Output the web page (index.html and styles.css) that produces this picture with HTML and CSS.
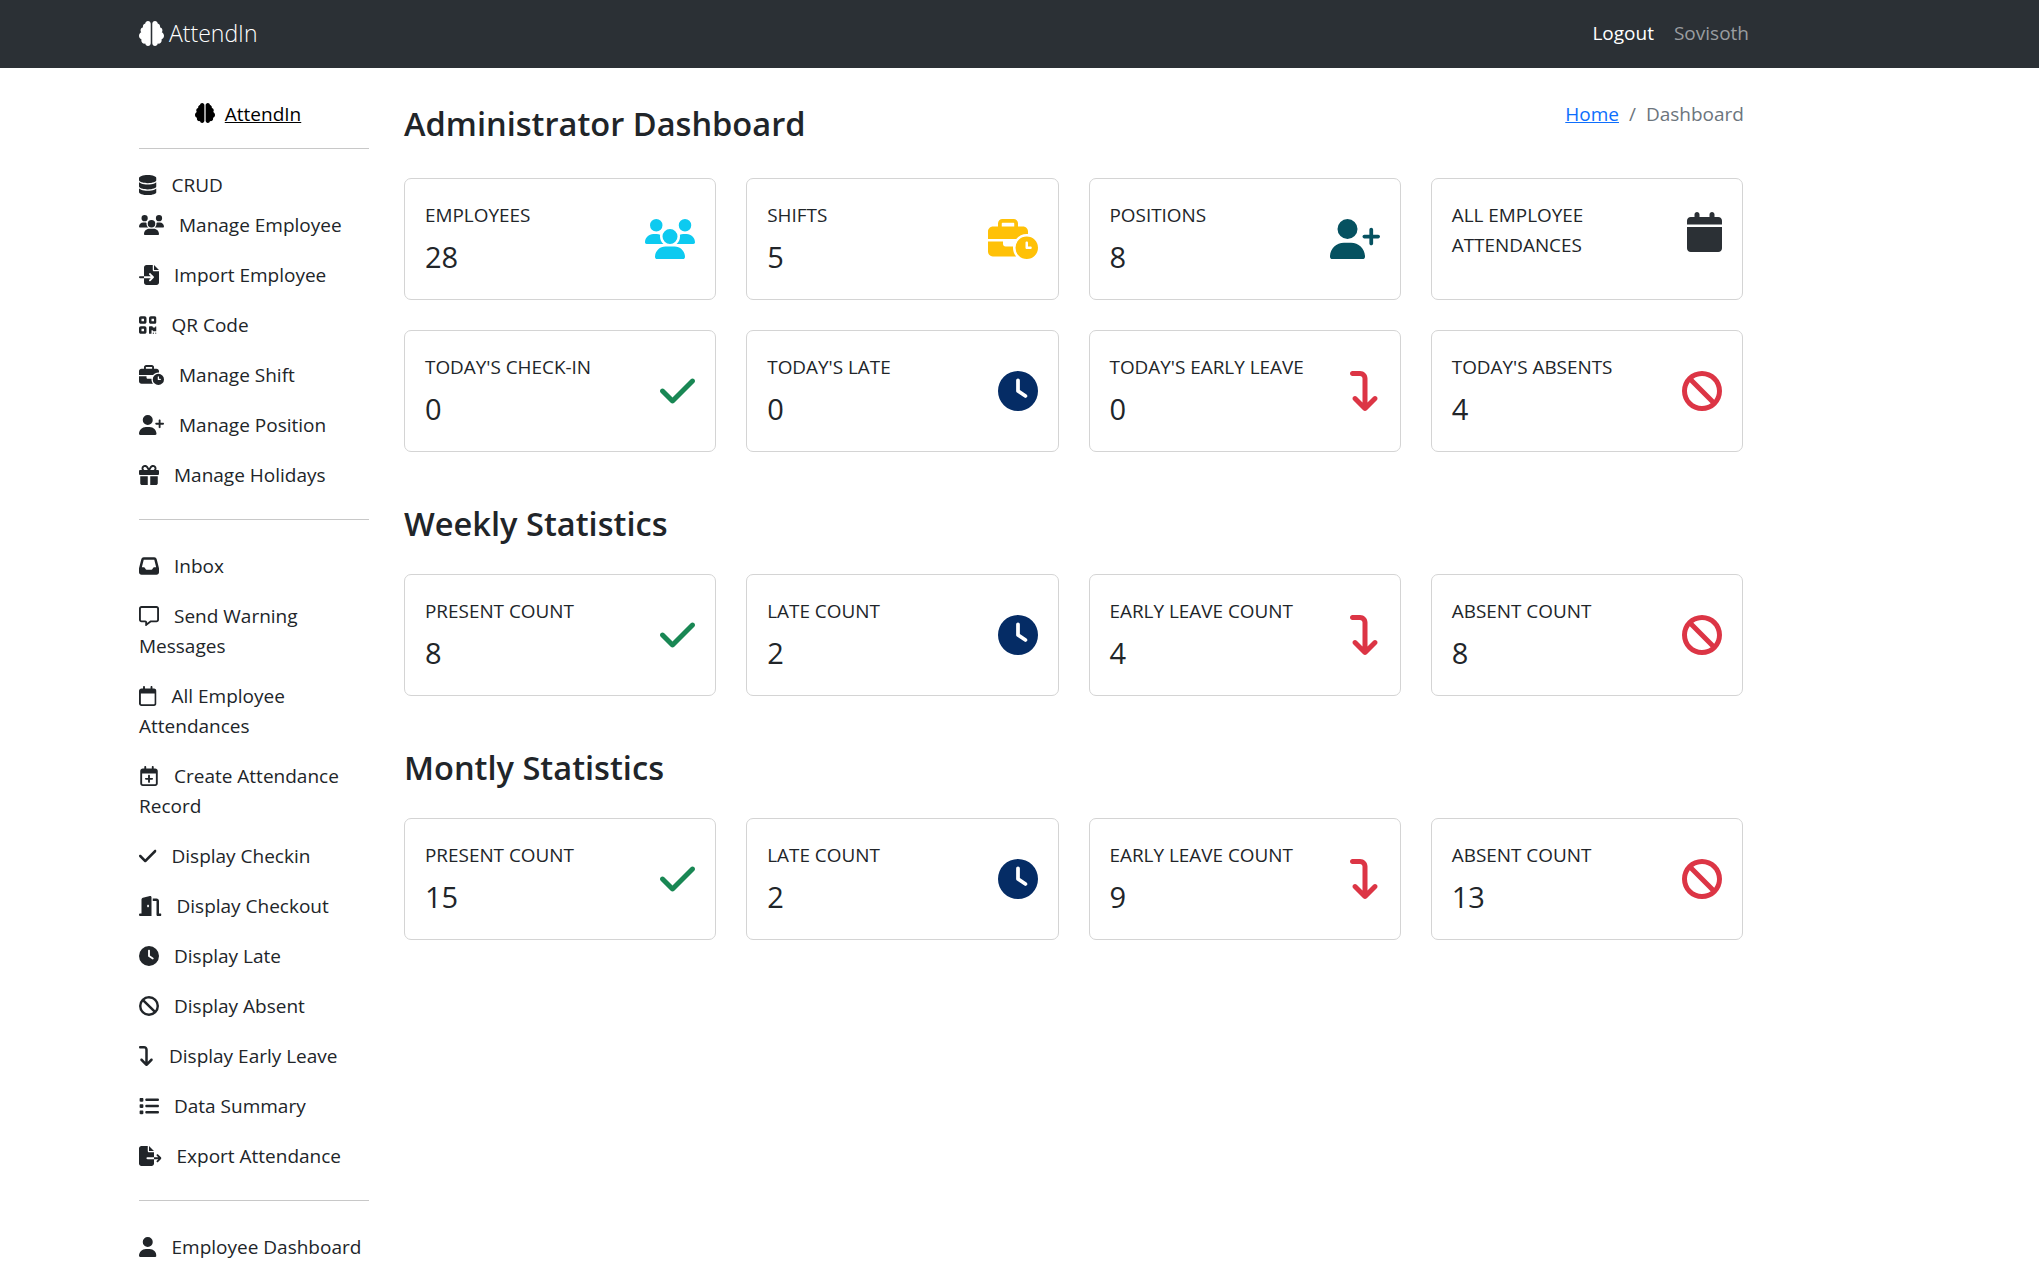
FILE: index.html
```html
<!DOCTYPE html>
<html lang="en">
<head>
<meta charset="utf-8">
<title>AttendIn</title>
<link rel="stylesheet" href="styles.css">
</head>
<body>
<svg class="defs" aria-hidden="true">
<symbol id="brain" viewBox="0 0 512 512"><path d="M184 0c30.9 0 56 25.1 56 56V456c0 30.9-25.1 56-56 56c-28.9 0-52.7-21.9-55.7-50.1c-5.2 1.4-10.7 2.1-16.3 2.1c-35.3 0-64-28.7-64-64c0-7.4 1.3-14.6 3.6-21.2C21.4 367.4 0 338.2 0 304c0-31.9 18.7-59.5 45.8-72.3C37.1 220.8 32 207 32 192c0-30.7 21.6-56.3 50.4-62.6C80.8 123.9 80 118 80 112c0-29.9 20.6-55.1 48.3-62.1C131.3 21.9 155.1 0 184 0zM328 0c28.9 0 52.6 21.9 55.7 49.9c27.8 7 48.3 32.1 48.3 62.1c0 6-.8 11.9-2.4 17.4c28.8 6.2 50.4 31.9 50.4 62.6c0 15-5.1 28.8-13.8 39.7C493.3 244.5 512 272.1 512 304c0 34.2-21.4 63.4-51.6 74.8c2.3 6.6 3.6 13.8 3.6 21.2c0 35.3-28.7 64-64 64c-5.6 0-11.1-.7-16.3-2.1c-3 28.2-26.8 50.1-55.7 50.1c-30.9 0-56-25.1-56-56V56c0-30.9 25.1-56 56-56z"/></symbol>
<symbol id="database" viewBox="0 0 448 512"><path d="M448 80v48c0 44.2-100.3 80-224 80S0 172.2 0 128V80C0 35.8 100.3 0 224 0S448 35.8 448 80zM393.2 214.7c20.8-7.4 39.9-16.9 54.8-28.6V288c0 44.2-100.3 80-224 80S0 332.2 0 288V186.1c14.9 11.8 34 21.2 54.8 28.6C99.7 230.7 159.5 240 224 240s124.3-9.3 169.2-25.3zM0 346.1c14.9 11.8 34 21.2 54.8 28.6C99.7 390.7 159.5 400 224 400s124.3-9.3 169.2-25.3c20.8-7.4 39.9-16.9 54.8-28.6V432c0 44.2-100.3 80-224 80S0 476.2 0 432V346.1z"/></symbol>
<symbol id="users" viewBox="0 0 640 512"><path d="M144 0a80 80 0 1 1 0 160A80 80 0 1 1 144 0zM512 0a80 80 0 1 1 0 160A80 80 0 1 1 512 0zM0 298.7C0 239.8 47.8 192 106.7 192h42.7c15.9 0 31 3.5 44.6 9.7c-1.3 7.2-1.9 14.7-1.9 22.3c0 38.2 16.8 72.5 43.3 96c-.2 0-.4 0-.7 0H21.3C9.6 320 0 310.4 0 298.7zM405.3 320c-.2 0-.4 0-.7 0c26.6-23.5 43.3-57.8 43.3-96c0-7.6-.7-15-1.9-22.3c13.6-6.3 28.7-9.7 44.6-9.7h42.7C592.2 192 640 239.8 640 298.7c0 11.8-9.6 21.3-21.3 21.3H405.3zM224 224a96 96 0 1 1 192 0 96 96 0 1 1 -192 0zM128 485.3C128 411.7 187.7 352 261.3 352H378.7C452.3 352 512 411.7 512 485.3c0 14.7-11.9 26.7-26.7 26.7H154.7c-14.7 0-26.7-11.9-26.7-26.7z"/></symbol>
<symbol id="file-import" viewBox="0 0 512 512"><path d="M128 64c0-35.3 28.7-64 64-64H352V128c0 17.7 14.3 32 32 32H512V448c0 35.3-28.7 64-64 64H192c-35.3 0-64-28.7-64-64V336H302.1l-39 39c-9.4 9.4-9.4 24.6 0 33.9s24.6 9.4 33.9 0l80-80c9.4-9.4 9.4-24.6 0-33.9l-80-80c-9.4-9.4-24.6-9.4-33.9 0s-9.4 24.6 0 33.9l39 39H128V64zm0 224v48H24c-13.3 0-24-10.7-24-24s10.7-24 24-24H128zM512 128H384V0L512 128z"/></symbol>
<symbol id="qr" viewBox="0 0 448 512"><path d="M0 80C0 53.5 21.5 32 48 32h96c26.5 0 48 21.5 48 48v96c0 26.5-21.5 48-48 48H48c-26.5 0-48-21.5-48-48V80zM64 96v64h64V96H64zM0 336c0-26.5 21.5-48 48-48h96c26.5 0 48 21.5 48 48v96c0 26.5-21.5 48-48 48H48c-26.5 0-48-21.5-48-48V336zm64 16v64h64V352H64zM304 32h96c26.5 0 48 21.5 48 48v96c0 26.5-21.5 48-48 48H304c-26.5 0-48-21.5-48-48V80c0-26.5 21.5-48 48-48zm80 64H320v64h64V96zM256 304c0-8.8 7.2-16 16-16h64c8.8 0 16 7.2 16 16s7.2 16 16 16h32c8.8 0 16-7.2 16-16s7.2-16 16-16s16 7.2 16 16v96c0 8.8-7.2 16-16 16H368c-8.8 0-16-7.2-16-16s-7.2-16-16-16s-16 7.2-16 16v64c0 8.8-7.2 16-16 16H272c-8.8 0-16-7.2-16-16V304zM368 480a16 16 0 1 1 0-32 16 16 0 1 1 0 32zm64 0a16 16 0 1 1 0-32 16 16 0 1 1 0 32z"/></symbol>
<symbol id="business-time" viewBox="0 0 640 512"><path d="M184 48H328c4.4 0 8 3.6 8 8V96H176V56c0-4.4 3.6-8 8-8zm-56 8V96H64C28.7 96 0 124.7 0 160v96H192 352h8.2c32.3-39.1 81.1-64 135.8-64c5.4 0 10.7 .2 16 .7V160c0-35.3-28.7-64-64-64H384V56c0-30.9-25.1-56-56-56H184c-30.9 0-56 25.1-56 56zM320 352H224c-17.7 0-32-14.3-32-32V288H0V416c0 35.3 28.7 64 64 64H360.2C335.1 449.6 320 410.5 320 368c0-5.4 .2-10.7 .7-16l-.7 0zm320 16a144 144 0 1 0 -288 0 144 144 0 1 0 288 0zM496 288c8.8 0 16 7.2 16 16v48h32c8.8 0 16 7.2 16 16s-7.2 16-16 16H496c-8.8 0-16-7.2-16-16V304c0-8.8 7.2-16 16-16z"/></symbol>
<symbol id="user-plus" viewBox="0 0 640 512"><path d="M96 128a128 128 0 1 1 256 0A128 128 0 1 1 96 128zM0 482.3C0 383.8 79.8 304 178.3 304h91.4C368.2 304 448 383.8 448 482.3c0 16.4-13.3 29.7-29.7 29.7H29.7C13.3 512 0 498.7 0 482.3zM504 312V248H440c-13.3 0-24-10.7-24-24s10.7-24 24-24h64V136c0-13.3 10.7-24 24-24s24 10.7 24 24v64h64c13.3 0 24 10.7 24 24s-10.7 24-24 24H552v64c0 13.3-10.7 24-24 24s-24-10.7-24-24z"/></symbol>
<symbol id="gift" viewBox="0 0 512 512"><path d="M190.5 68.8L225.3 128H224 152c-22.1 0-40-17.9-40-40s17.9-40 40-40h2.2c14.9 0 28.8 7.9 36.3 20.8zM64 88c0 14.4 3.5 28 9.6 40H32c-17.7 0-32 14.3-32 32v64c0 17.7 14.3 32 32 32H480c17.7 0 32-14.3 32-32V160c0-17.7-14.3-32-32-32H438.4c6.1-12 9.6-25.6 9.6-40c0-48.6-39.4-88-88-88h-2.2c-31.9 0-61.5 16.9-77.7 44.4L256 85.5l-24.1-41C215.7 16.9 186.1 0 154.2 0H152C103.4 0 64 39.4 64 88zm336 0c0 22.1-17.9 40-40 40H288h-1.3l34.8-59.2C329.1 55.9 342.9 48 357.8 48H360c22.1 0 40 17.9 40 40zM32 288V464c0 26.5 21.5 48 48 48H224V288H32zM288 512H432c26.5 0 48-21.5 48-48V288H288V512z"/></symbol>
<symbol id="inbox" viewBox="0 0 512 512"><path d="M121 32C91.6 32 66 52 58.9 80.5L1.9 308.4C.6 313.5 0 318.7 0 323.9V416c0 35.3 28.7 64 64 64H448c35.3 0 64-28.7 64-64V323.9c0-5.2-.6-10.4-1.9-15.5l-57-227.9C446 52 420.4 32 391 32H121zm0 64H391l48 192H387.8c-12.1 0-23.2 6.8-28.6 17.7l-14.3 28.6c-5.4 10.8-16.5 17.7-28.6 17.7H195.8c-12.1 0-23.2-6.8-28.6-17.7l-14.3-28.6c-5.4-10.8-16.5-17.7-28.6-17.7H73L121 96z"/></symbol>
<symbol id="message" viewBox="0 0 512 512"><path d="M160 368c26.5 0 48 21.5 48 48v16l72.5-54.4c8.3-6.2 18.4-9.6 28.8-9.6H448c8.8 0 16-7.2 16-16V64c0-8.8-7.2-16-16-16H64c-8.8 0-16 7.2-16 16V352c0 8.8 7.2 16 16 16h96zm48 124l-.2 .2-5.1 3.8-17.1 12.8c-4.8 3.6-11.3 4.2-16.8 1.5s-8.8-8.2-8.8-14.3V474.7v-6.4V468v-4V416H112 64c-35.3 0-64-28.7-64-64V64C0 28.7 28.7 0 64 0H448c35.3 0 64 28.7 64 64V352c0 35.3-28.7 64-64 64H309.3L208 492z"/></symbol>
<symbol id="calendar-o" viewBox="0 0 448 512"><path d="M152 24c0-13.3-10.7-24-24-24s-24 10.7-24 24V64H64C28.7 64 0 92.7 0 128v16 48V448c0 35.3 28.7 64 64 64H384c35.3 0 64-28.7 64-64V192 144 128c0-35.3-28.7-64-64-64H344V24c0-13.3-10.7-24-24-24s-24 10.7-24 24V64H152V24zM48 192H400V448c0 8.8-7.2 16-16 16H64c-8.8 0-16-7.2-16-16V192z"/></symbol>
<symbol id="calendar-plus" viewBox="-32 0 512 512"><path d="M152 24c0-13.3-10.7-24-24-24s-24 10.7-24 24V64H64C28.7 64 0 92.7 0 128v16 48V448c0 35.3 28.7 64 64 64H384c35.3 0 64-28.7 64-64V192 144 128c0-35.3-28.7-64-64-64H344V24c0-13.3-10.7-24-24-24s-24 10.7-24 24V64H152V24zM48 192H400V448c0 8.8-7.2 16-16 16H64c-8.8 0-16-7.2-16-16V192z"/><path d="M200 408v-56h-56c-13.3 0-24-10.7-24-24s10.7-24 24-24h56v-56c0-13.3 10.7-24 24-24s24 10.7 24 24v56h56c13.3 0 24 10.7 24 24s-10.7 24-24 24h-56v56c0 13.3-10.7 24-24 24s-24-10.7-24-24z"/></symbol>
<symbol id="calendar" viewBox="0 0 448 512"><path d="M96 32V64H48C21.5 64 0 85.5 0 112v48H448V112c0-26.5-21.5-48-48-48H352V32c0-17.7-14.3-32-32-32s-32 14.3-32 32V64H160V32c0-17.7-14.3-32-32-32S96 14.3 96 32zM448 192H0V464c0 26.5 21.5 48 48 48H400c26.5 0 48-21.5 48-48V192z"/></symbol>
<symbol id="check" viewBox="0 0 448 512"><path d="M470.6 105.4c12.5 12.5 12.5 32.8 0 45.3l-256 256c-12.5 12.5-32.8 12.5-45.3 0l-128-128c-12.5-12.5-12.5-32.8 0-45.3s32.8-12.5 45.3 0L192 338.7 425.4 105.4c12.5-12.5 32.8-12.5 45.3 0z" transform="translate(-32 0)"/></symbol>
<symbol id="door" viewBox="0 0 576 512"><path d="M320 32c0-9.9-4.5-19.2-12.3-25.2S289.8-1.4 280.2 1l-179.9 45C79 51.3 64 70.5 64 92.5V448H32c-17.7 0-32 14.3-32 32s14.3 32 32 32H96 288h32V480 32zM256 256c0 17.7-10.7 32-24 32s-24-14.3-24-32s10.7-32 24-32s24 14.3 24 32zm96-128h96V480c0 17.7 14.3 32 32 32h64c17.7 0 32-14.3 32-32s-14.3-32-32-32H512V128c0-35.3-28.7-64-64-64H352v64z"/></symbol>
<symbol id="clock" viewBox="0 0 512 512"><path d="M256 0a256 256 0 1 1 0 512A256 256 0 1 1 256 0zM232 120V256c0 8 4 15.5 10.7 20l96 64c11 7.4 25.9 4.4 33.3-6.7s4.4-25.9-6.7-33.3L280 243.2V120c0-13.3-10.7-24-24-24s-24 10.7-24 24z"/></symbol>
<symbol id="ban" viewBox="0 0 512 512"><path d="M367.2 412.5L99.5 144.8C77.1 176.1 64 214.5 64 256c0 106 86 192 192 192c41.5 0 79.9-13.1 111.2-35.5zm45.3-45.3C434.9 335.9 448 297.5 448 256c0-106-86-192-192-192c-41.5 0-79.9 13.1-111.2 35.5L412.5 367.2zM0 256a256 256 0 1 1 512 0A256 256 0 1 1 0 256z"/></symbol>
<symbol id="turn-down" viewBox="0 0 384 512"><path d="M32 64C14.3 64 0 49.7 0 32S14.3 0 32 0l96 0c53 0 96 43 96 96l0 306.7 73.4-73.4c12.5-12.5 32.8-12.5 45.3 0s12.5 32.8 0 45.3l-128 128c-12.5 12.5-32.8 12.5-45.3 0l-128-128c-12.5-12.5-12.5-32.8 0-45.3s32.8-12.5 45.3 0L160 402.7 160 96c0-17.7-14.3-32-32-32L32 64z"/></symbol>
<symbol id="list" viewBox="0 0 512 512"><path d="M40 48C26.7 48 16 58.7 16 72v48c0 13.3 10.7 24 24 24H88c13.3 0 24-10.7 24-24V72c0-13.3-10.7-24-24-24H40zM192 64c-17.7 0-32 14.3-32 32s14.3 32 32 32H480c17.7 0 32-14.3 32-32s-14.3-32-32-32H192zm0 160c-17.7 0-32 14.3-32 32s14.3 32 32 32H480c17.7 0 32-14.3 32-32s-14.3-32-32-32H192zm0 160c-17.7 0-32 14.3-32 32s14.3 32 32 32H480c17.7 0 32-14.3 32-32s-14.3-32-32-32H192zM16 232v48c0 13.3 10.7 24 24 24H88c13.3 0 24-10.7 24-24V232c0-13.3-10.7-24-24-24H40c-13.3 0-24 10.7-24 24zM40 368c-13.3 0-24 10.7-24 24v48c0 13.3 10.7 24 24 24H88c13.3 0 24-10.7 24-24V392c0-13.3-10.7-24-24-24H40z"/></symbol>
<symbol id="file-export" viewBox="0 0 576 512"><path d="M0 64C0 28.7 28.7 0 64 0H224V128c0 17.7 14.3 32 32 32H384V288H216c-13.3 0-24 10.7-24 24s10.7 24 24 24H384V448c0 35.3-28.7 64-64 64H64c-35.3 0-64-28.7-64-64V64zM384 336V288H494.1l-39-39c-9.4-9.4-9.4-24.6 0-33.9s24.6-9.4 33.9 0l80 80c9.4 9.4 9.4 24.6 0 33.9l-80 80c-9.4 9.4-24.6 9.4-33.9 0s-9.4-24.6 0-33.9l39-39H384zm0-208H256V0L384 128z"/></symbol>
<symbol id="user" viewBox="0 0 448 512"><path d="M224 256A128 128 0 1 0 224 0a128 128 0 1 0 0 256zm-45.7 48C79.8 304 0 383.8 0 482.3C0 498.7 13.3 512 29.7 512H418.3c16.4 0 29.7-13.3 29.7-29.7C448 383.8 368.2 304 269.7 304H178.3z"/></symbol>
</svg>

<header class="navbar">
  <a class="brand"><svg class="brand-icon"><use href="#brain"/></svg>AttendIn</a>
  <nav class="nav-right">
    <a class="nav-logout">Logout</a>
    <a class="nav-user">Sovisoth</a>
  </nav>
</header>

<div class="layout">
  <aside class="sidebar">
    <div class="side-brand"><svg class="side-brain"><use href="#brain"/></svg><a class="side-link">AttendIn</a></div>
    <hr class="rule rule-first">
    <p class="item item-tight"><svg class="ico w448"><use href="#database"/></svg>CRUD</p>
    <p class="item"><svg class="ico w640"><use href="#users"/></svg>Manage Employee</p>
    <p class="item"><svg class="ico w512"><use href="#file-import"/></svg>Import Employee</p>
    <p class="item"><svg class="ico w448"><use href="#qr"/></svg>QR Code</p>
    <p class="item"><svg class="ico w640"><use href="#business-time"/></svg>Manage Shift</p>
    <p class="item"><svg class="ico w640"><use href="#user-plus"/></svg>Manage Position</p>
    <p class="item"><svg class="ico w512"><use href="#gift"/></svg>Manage Holidays</p>
    <hr class="rule">
    <p class="item"><svg class="ico w512"><use href="#inbox"/></svg>Inbox</p>
    <p class="item"><svg class="ico w512"><use href="#message"/></svg>Send Warning Messages</p>
    <p class="item"><svg class="ico w448"><use href="#calendar-o"/></svg>All Employee Attendances</p>
    <p class="item"><svg class="ico w512"><use href="#calendar-plus"/></svg>Create Attendance Record</p>
    <p class="item"><svg class="ico w448"><use href="#check"/></svg>Display Checkin</p>
    <p class="item"><svg class="ico w576"><use href="#door"/></svg>Display Checkout</p>
    <p class="item"><svg class="ico w512"><use href="#clock"/></svg>Display Late</p>
    <p class="item"><svg class="ico w512"><use href="#ban"/></svg>Display Absent</p>
    <p class="item"><svg class="ico w384"><use href="#turn-down"/></svg>Display Early Leave</p>
    <p class="item"><svg class="ico w512"><use href="#list"/></svg>Data Summary</p>
    <p class="item"><svg class="ico w576"><use href="#file-export"/></svg>Export Attendance</p>
    <hr class="rule">
    <p class="item"><svg class="ico w448"><use href="#user"/></svg>Employee Dashboard</p>
  </aside>

  <main class="main">
    <div class="page-head">
      <h1 class="title">Administrator Dashboard</h1>
      <ol class="crumbs"><li><a class="crumb-link">Home</a></li><li class="crumb-sep">/</li><li class="crumb-now">Dashboard</li></ol>
    </div>

    <section class="cards">
      <article class="card"><div class="card-body"><div class="card-text"><p class="label">EMPLOYEES</p><p class="value">28</p></div><svg class="big w640 c-info"><use href="#users"/></svg></div></article>
      <article class="card"><div class="card-body"><div class="card-text"><p class="label">SHIFTS</p><p class="value">5</p></div><svg class="big w640 c-warn"><use href="#business-time"/></svg></div></article>
      <article class="card"><div class="card-body"><div class="card-text"><p class="label">POSITIONS</p><p class="value">8</p></div><svg class="big w640 c-teal"><use href="#user-plus"/></svg></div></article>
      <article class="card"><div class="card-body"><div class="card-text"><p class="label">ALL EMPLOYEE ATTENDANCES</p></div><svg class="big w448 c-dark"><use href="#calendar"/></svg></div></article>
      <article class="card"><div class="card-body"><div class="card-text"><p class="label">TODAY'S CHECK-IN</p><p class="value">0</p></div><svg class="big w448 c-green"><use href="#check"/></svg></div></article>
      <article class="card"><div class="card-body"><div class="card-text"><p class="label">TODAY'S LATE</p><p class="value">0</p></div><svg class="big w512 c-navy"><use href="#clock"/></svg></div></article>
      <article class="card"><div class="card-body"><div class="card-text"><p class="label">TODAY'S EARLY LEAVE</p><p class="value">0</p></div><svg class="big w384 c-red"><use href="#turn-down"/></svg></div></article>
      <article class="card"><div class="card-body"><div class="card-text"><p class="label">TODAY'S ABSENTS</p><p class="value">4</p></div><svg class="big w512 c-red"><use href="#ban"/></svg></div></article>
    </section>

    <h2 class="title section-title">Weekly Statistics</h2>
    <section class="cards">
      <article class="card"><div class="card-body"><div class="card-text"><p class="label">PRESENT COUNT</p><p class="value">8</p></div><svg class="big w448 c-green"><use href="#check"/></svg></div></article>
      <article class="card"><div class="card-body"><div class="card-text"><p class="label">LATE COUNT</p><p class="value">2</p></div><svg class="big w512 c-navy"><use href="#clock"/></svg></div></article>
      <article class="card"><div class="card-body"><div class="card-text"><p class="label">EARLY LEAVE COUNT</p><p class="value">4</p></div><svg class="big w384 c-red"><use href="#turn-down"/></svg></div></article>
      <article class="card"><div class="card-body"><div class="card-text"><p class="label">ABSENT COUNT</p><p class="value">8</p></div><svg class="big w512 c-red"><use href="#ban"/></svg></div></article>
    </section>

    <h2 class="title section-title">Montly Statistics</h2>
    <section class="cards">
      <article class="card"><div class="card-body"><div class="card-text"><p class="label">PRESENT COUNT</p><p class="value">15</p></div><svg class="big w448 c-green"><use href="#check"/></svg></div></article>
      <article class="card"><div class="card-body"><div class="card-text"><p class="label">LATE COUNT</p><p class="value">2</p></div><svg class="big w512 c-navy"><use href="#clock"/></svg></div></article>
      <article class="card"><div class="card-body"><div class="card-text"><p class="label">EARLY LEAVE COUNT</p><p class="value">9</p></div><svg class="big w384 c-red"><use href="#turn-down"/></svg></div></article>
      <article class="card"><div class="card-body"><div class="card-text"><p class="label">ABSENT COUNT</p><p class="value">13</p></div><svg class="big w512 c-red"><use href="#ban"/></svg></div></article>
    </section>
  </main>
</div>
</body>
</html>
```
FILE: styles.css
```css
html, body { margin: 0; padding: 0; height: 1264px; overflow: hidden; background: #fff; }
body { font-family: "Open Sans", "Liberation Sans", sans-serif; font-size: 19px; line-height: 30px; color: #212529; }
.defs { display: none; }
p, h1, h2, ol { margin: 0; padding: 0; }

.navbar { height: 68px; box-sizing: border-box; background: #2b3035; display: flex; align-items: center; justify-content: space-between; padding: 0 290px 2px 139px; }
.brand { display: flex; align-items: center; font-size: 23px; font-weight: 300; color: #fff; }
.brand-icon { width: 25px; height: 25px; margin-right: 5px; fill: #fff; }
.nav-right { display: flex; gap: 20px; }
.nav-logout { color: #fff; }
.nav-user { color: #9a9da0; }

.layout { display: flex; gap: 35px; padding: 31px 296px 0 139px; }
.sidebar { width: 230px; flex: none; }
.main { flex: 1; min-width: 0; padding-top: 4px; }

.side-brand { text-align: center; height: 30px; }
.side-brain { width: 20px; height: 20px; margin-right: 10px; fill: #000; vertical-align: -2px; }
.side-link { color: #000; text-decoration: underline; margin-right: 12px; }
.rule { border: 0; border-top: 1px solid #c8c8c8; margin: 29px 0 31px; }
.rule-first { margin: 19px 0 21px; }
.item { margin-bottom: 20px; }
.item-tight { margin-bottom: 10px; }
.ico { height: 20px; margin-right: 15px; fill: #212529; vertical-align: -2.5px; }
.w384 { width: 15px; }
.w448 { width: 17.5px; }
.w512 { width: 20px; }
.w576 { width: 22.5px; }
.w640 { width: 25px; }

.page-head { display: flex; justify-content: space-between; align-items: flex-start; margin-bottom: 33px; }
.title { font-size: 32.6px; line-height: 42px; font-weight: 600; color: #212529; }
.section-title { margin: 51px 0 29px; }
.crumbs { list-style: none; display: flex; gap: 10px; color: #6c757d; margin: -4px -1px 0 0; }
.crumb-link { color: #0d6efd; text-decoration: underline; }

.cards { display: grid; grid-template-columns: repeat(4, 1fr); gap: 30px; }
.card { height: 122px; box-sizing: border-box; border: 1px solid #d4d4d4; border-radius: 7px; padding: 20px; }
.card-body { display: flex; justify-content: space-between; align-items: center; }
.label { padding-top: 1px; margin-bottom: 4px; font-size: 18.9px; }
.value { font-size: 29px; line-height: 45px; }
.big { height: 40px; flex: none; }
.big.w384 { width: 30px; }
.big.w448 { width: 35px; }
.big.w512 { width: 40px; }
.big.w640 { width: 50px; }
.c-info { fill: #0dcaf0; }
.c-warn { fill: #ffc107; }
.c-teal { fill: #055160; }
.c-dark { fill: #2b3035; }
.c-green { fill: #198754; }
.c-navy { fill: #052c65; }
.c-red { fill: #dc3545; }
```
